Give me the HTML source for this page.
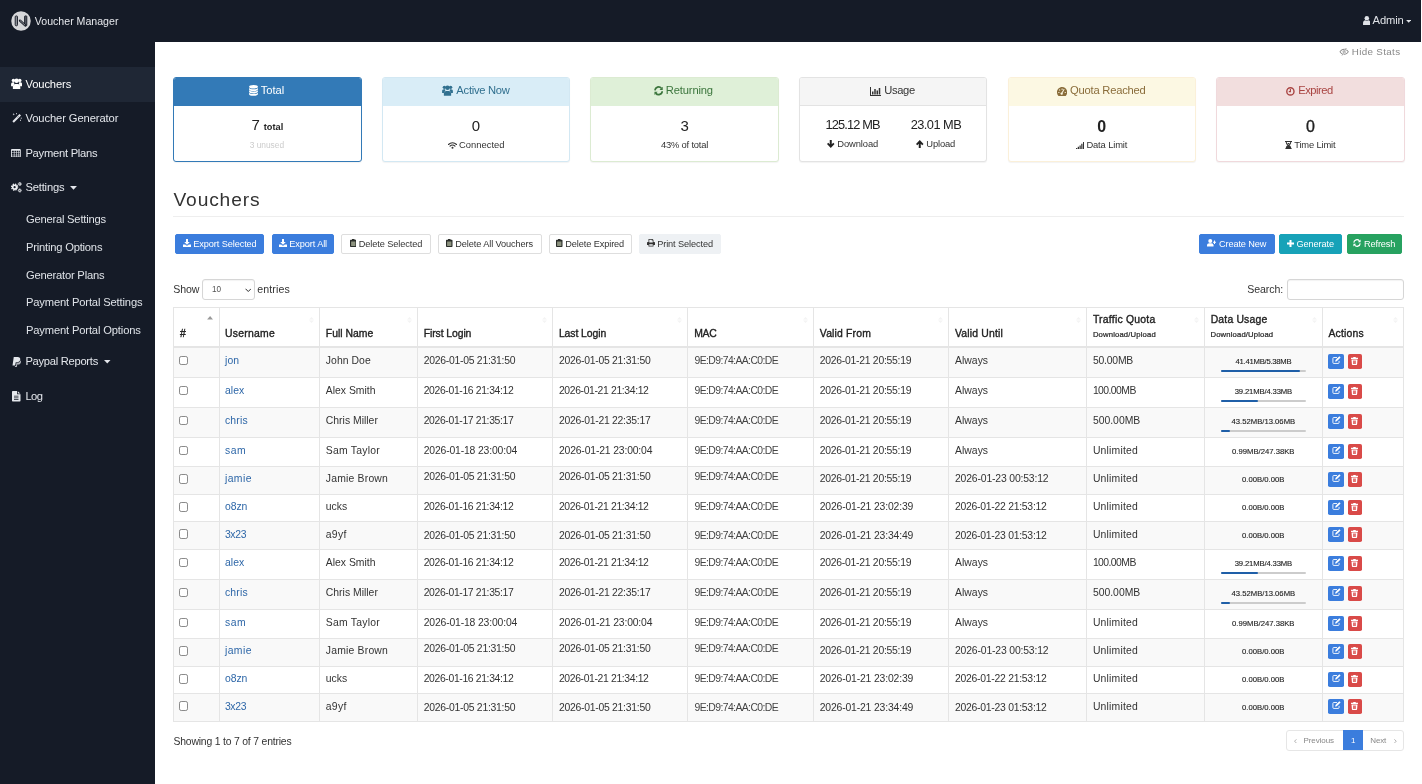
<!DOCTYPE html>
<html>
<head>
<meta charset="utf-8">
<title>Voucher Manager</title>
<style>
*{box-sizing:border-box;}
html,body{margin:0;padding:0;}
body{width:1422px;height:784px;overflow:hidden;position:relative;background:#151b27;font-family:"Liberation Sans",sans-serif;font-size:10.4px;color:#333;}
.abs{position:absolute;white-space:nowrap;}
svg{display:block;}
/* ---------- top bar ---------- */
#top{position:absolute;left:0;top:0;width:1422px;height:42px;background:#151b27;}
#brand{left:34.800px;top:14px;font-size:10.600px;line-height:14px;color:#e6e8ec;letter-spacing:0;}
#admin{left:1372.600px;top:13.200px;font-size:11.2px;line-height:14px;color:#dfe2e7;letter-spacing:-0.12px;}
/* ---------- sidebar ---------- */
#side{position:absolute;left:0;top:42px;width:155px;height:742px;background:#151b27;}
.nav{position:absolute;left:0;width:155px;height:35px;color:#e4e7ec;font-size:11.2px;line-height:14px;}
.nav.on{background:#1f2735;color:#fff;}
.nav .t{position:absolute;left:25.4px;top:10px;white-space:nowrap;}
.nav .i{position:absolute;left:11px;top:12px;}
.sub{position:absolute;left:25.9px;color:#dfe3e8;font-size:11.2px;line-height:14px;white-space:nowrap;}
/* ---------- main ---------- */
#main{position:absolute;left:155px;top:42px;width:1267px;height:742px;background:#fff;}
.card{position:absolute;top:77px;width:188.400px;height:85px;border:1px solid #ddd;border-radius:3px;background:#fff;box-shadow:0 1px 1px rgba(0,0,0,.05);overflow:hidden;}
.card .h{position:absolute;left:0;top:0;width:100%;height:28.5px;border-bottom:1px solid #ddd;}
.ctr{position:absolute;left:0;width:100%;text-align:center;white-space:nowrap;}

.card .hd{position:absolute;left:0;top:0;width:100%;height:28px;}
.card .ttl{letter-spacing:-0.27px;position:absolute;left:0;top:5.400px;width:100%;text-align:center;font-size:11.2px;line-height:14px;white-space:nowrap;}
.card .ttl svg{display:inline-block;vertical-align:-1.5px;margin-right:3px;}
.num{font-size:15px;line-height:18px;color:#222;}
.lbl{font-size:9.4px;line-height:12px;color:#333;}
.lbl svg{display:inline-block;vertical-align:-1px;margin-right:2.5px;}
h2{position:absolute;margin:0;left:173.5px;top:188px;font-size:19.2px;line-height:24px;font-weight:400;color:#333;letter-spacing:0.86px;}
#hr{position:absolute;left:173px;top:216px;width:1231px;height:1px;background:#eee;}
.btn{position:absolute;top:233.700px;height:20.500px;border-radius:2px;font-size:9.200px;line-height:19px;text-align:center;white-space:nowrap;color:#fff;letter-spacing:-0.1px;}
.btn svg{display:inline-block;vertical-align:-0.200px;margin-right:2.500px;}
.btn.pri{background:#3b7ddd;border:1px solid #3b7ddd;}
.btn.def{background:#fff;border:1px solid #dedede;color:#333;}
.btn.lt{background:#eef1f4;border:1px solid #eef1f4;color:#333;}
.btn.inf{background:#17a2b8;border:1px solid #17a2b8;}
.btn.suc{background:#27a260;border:1px solid #27a260;}

.btn i{font-style:normal;}
#len,#srch{position:absolute;top:279px;height:21px;border:1px solid #d6d6d6;border-radius:3px;background:#fff;box-shadow:inset 0 1px 1px rgba(0,0,0,.05);}

.ab{position:absolute;height:15px;border-radius:1.800px;}
.ab svg{position:absolute;left:50%;top:50%;}
.ab.e{left:1328px;width:16px;background:#3b7ddd;}
.ab.d{left:1348px;width:14px;background:#d94a48;}

#pg{position:absolute;left:1286px;top:730px;width:118px;height:21px;border:1px solid #e6e6e6;border-radius:3px;background:#fff;}
#pg1{position:absolute;left:1343px;top:730.400px;width:19.600px;height:20px;background:#3b7ddd;}
.pgt{font-size:8px;line-height:10px;color:#888;}
</style>
</head>
<body>
<div id="fg" style="position:absolute;left:0;top:0;width:1422px;height:784px;will-change:transform">
<!-- TOPBAR -->
<div id="top">
  <svg style="position:absolute;left:11.300px;top:11.400px" width="20" height="20" viewBox="0 0 20 20"><circle cx="10" cy="10" r="9.750" fill="#d6d7da"/><rect x="4.200" y="4.900" width="2.300" height="9.900" rx="1" fill="#8b8e95" stroke="#161b26" stroke-width="0.900"/><rect x="13.600" y="4.900" width="2.200" height="9.900" rx="0.600" fill="#555a63" stroke="#161b26" stroke-width="0.900"/><path d="M9 9.600L14.300 14.500" stroke="#161b26" stroke-width="2.300" stroke-linecap="round"/><path d="M9.200 9.700L14 14.200" stroke="#c9cacd" stroke-width="0.700" stroke-linecap="round" stroke-dasharray="1 0.800"/></svg>
  <div id="brand" class="abs">Voucher Manager</div>
  <svg style="position:absolute;left:1362.500px;top:15.700px" width="7.600" height="9" viewBox="0 0 15 18"><g fill="#dfe2e7"><circle cx="7.500" cy="4.500" r="4.500"/><path d="M0 18v-4c0-3 2-5 4.500-5.300 1 .8 2 1.100 3 1.100s2-.3 3-1.100C13 9 15 11 15 14v4z"/></g></svg><div id="admin" class="abs">Admin</div><svg style="position:absolute;left:1405.700px;top:19.800px" width="5.400" height="2.800" viewBox="0 0 11 6"><path fill="#dfe2e7" d="M0 0h11L5.500 6z"/></svg>
  <div style="position:absolute;left:1421px;top:0;width:1px;height:42px;background:#fff"></div>
</div>
<!-- SIDEBAR -->
<div id="side">
  <div class="nav on" style="top:25px"><span class="i" style="left:10.800px;top:11px"><svg width="11.2" height="11" viewBox="0 0 22 22"><g fill="#fff"><circle cx="4.600" cy="4.800" r="3.400"/><circle cx="17.400" cy="4.800" r="3.400"/><circle cx="11" cy="5.600" r="4.600"/><path d="M0 16.500v-4c0-2.200 1.600-3.800 3.800-3.800h2.400c-.5 1.200-.3 2.600.8 3.700-2.200 1-3.200 2.700-3.200 4.100z"/><path d="M22 16.500v-4c0-2.200-1.600-3.800-3.800-3.800h-2.400c.5 1.200.3 2.600-.8 3.700 2.200 1 3.200 2.700 3.200 4.100z"/><path d="M3.600 22v-4.500c0-3.200 2.200-5.300 5-5.300h4.800c2.800 0 5 2.100 5 5.300V22z"/></g></svg></span><span class="t" style="letter-spacing:-0.1px">Vouchers</span></div>
  <div class="nav" style="top:59.500px"><span class="i" style="left:11.500px;top:11.300px"><svg width="10" height="10" viewBox="0 0 20 20"><path d="M2.200 17.800L16.500 3.500" stroke="#e4e7ec" stroke-width="4.200" fill="none"/><path d="M11 9l2.200-2.200" stroke="#151b27" stroke-width="1" fill="none"/><g fill="#e4e7ec"><path d="M3.500 0l.7 1.800 1.800.7-1.800.7-.7 1.800-.7-1.800L1 2.500l1.800-.7z"/><rect x="8.500" y="0" width="1.500" height="2.500"/><rect x="17.500" y="9.500" width="2.500" height="1.500"/><rect x="16" y="13.500" width="2" height="2"/></g></svg></span><span class="t" style="top:9.500px;letter-spacing:-0.09px">Voucher Generator</span></div>
  <div class="nav" style="top:94px"><span class="i" style="left:11.400px;top:12.600px"><svg width="9.800" height="8.400" viewBox="0 0 20 17"><path fill="#e4e7ec" fill-rule="evenodd" d="M2 0h16a2 2 0 0 1 2 2v13a2 2 0 0 1-2 2H2a2 2 0 0 1-2-2V2a2 2 0 0 1 2-2zM1.800 3.500V7h4V3.500zm5.300 0V7h3.400V3.500zm4.700 0V7h3.400V3.500zm4.700 0V7h1.700V3.500zM1.800 8.300v3.200h4V8.300zm5.300 0v3.200h3.400V8.300zm4.700 0v3.200h3.400V8.300zm4.700 0v3.200h1.700V8.300zM1.800 12.800v2.600h4v-2.600zm5.300 0v2.600h3.400v-2.600zm4.700 0v2.600h3.400v-2.600zm4.700 0v2.600h1.700v-2.600z"/></svg></span><span class="t" style="letter-spacing:-0.25px">Payment Plans</span></div>
  <div class="nav" style="top:128.500px"><span class="i" style="left:11px;top:11.800px"><svg width="11" height="10.400" viewBox="0 0 22 21"><g fill="none" stroke="#eef0f3"><circle cx="7.200" cy="10.500" r="3.900" stroke-width="3.400"/><circle cx="7.200" cy="10.500" r="6.200" stroke-width="2.400" stroke-dasharray="2.900 1.970"/><circle cx="17.600" cy="3.900" r="2" stroke-width="2"/><circle cx="17.600" cy="3.900" r="3.300" stroke-width="1.500" stroke-dasharray="1.700 0.890"/><circle cx="17.600" cy="17.100" r="2" stroke-width="2"/><circle cx="17.600" cy="17.100" r="3.300" stroke-width="1.500" stroke-dasharray="1.700 0.890"/></g></svg></span><span class="t" style="top:9.500px;letter-spacing:-0.18px">Settings</span><svg style="position:absolute;left:70.200px;top:15.500px" width="7" height="3.700" viewBox="0 0 13 7"><path fill="#e4e7ec" d="M0 0h13L6.500 7z"/></svg></div>
  <div class="sub" style="top:170px;letter-spacing:-0.21px">General Settings</div>
  <div class="sub" style="top:197.700px;letter-spacing:-0.2px">Printing Options</div>
  <div class="sub" style="top:226px;letter-spacing:-0.2px">Generator Plans</div>
  <div class="sub" style="top:253.200px;letter-spacing:-0.15px">Payment Portal Settings</div>
  <div class="sub" style="top:281px;letter-spacing:-0.15px">Payment Portal Options</div>
  <div class="nav" style="top:302.500px"><span class="i" style="left:12px;top:12px"><svg width="9" height="10.500" viewBox="0 0 18 21"><path fill="#e4e7ec" d="M3.500 0h8c3.500 0 5.500 2.200 5 5.200-.6 3.600-3 5.300-6.500 5.300H7.500L6.300 17H1z"/><path fill="#e4e7ec" opacity=".75" d="M17 6.500c1 1 1.200 2.300.9 3.900-.6 3.200-2.800 4.600-5.900 4.600h-1.500l-1 6H5.500l.6-3h1.700l1.200-6.500h2c3.500 0 5.500-2 6-5z"/></svg></span><span class="t" style="top:9.500px;letter-spacing:-0.28px">Paypal Reports</span><svg style="position:absolute;left:104px;top:15.500px" width="6.500" height="3.500" viewBox="0 0 13 7"><path fill="#e4e7ec" d="M0 0h13L6.500 7z"/></svg></div>
  <div class="nav" style="top:337px"><span class="i" style="left:12px;top:12px"><svg width="8.500" height="10.500" viewBox="0 0 17 21"><path fill="#e4e7ec" fill-rule="evenodd" d="M1.500 0H10v6.500h7V19.500a1.500 1.500 0 0 1-1.500 1.500h-14A1.500 1.500 0 0 1 0 19.500v-18A1.500 1.500 0 0 1 1.500 0zM11.500 0.300L16.700 5h-5.200zM4 9.500v1.600h9V9.500zm0 3.500v1.600h9V13zm0 3.500v1.600h9v-1.600z"/></svg></span><span class="t" style="top:10px;letter-spacing:-0.6px">Log</span></div>
</div>
<!-- MAIN -->
<div id="main"></div>
<!--CARDS-->
<div class="abs" style="left:1339px;top:44.600px;font-size:9.800px;line-height:14px;color:#888;letter-spacing:0.34px"><svg style="display:inline-block;vertical-align:-1px;margin-right:2.500px" width="10.300" height="7.500" viewBox="0 0 20 16"><path fill="#888" fill-rule="evenodd" d="M0 8c2.500-4.200 6-6.300 10-6.300S17.500 3.800 20 8c-2.500 4.200-6 6.300-10 6.300S2.500 12.200 0 8zm2.200 0c2 3 4.800 4.500 7.800 4.500s5.800-1.500 7.800-4.500c-2-3-4.800-4.500-7.800-4.500S4.200 5 2.200 8z"/><circle cx="10" cy="8" r="3.300" fill="#888"/><path stroke="#fff" stroke-width="3.400" d="M14.800 .2L5.600 15.800"/><path stroke="#888" stroke-width="1.700" d="M14.500 0L5.500 16"/></svg>Hide Stats</div>

<div class="card" style="left:173.200px;border-color:#337ab7"><div class="hd" style="background:#337ab7"></div>
  <div class="ttl" style="color:#fff;letter-spacing:-0.03px;left:-1px"><svg width="9" height="10.800" viewBox="0 0 18 22"><g fill="#fff"><ellipse cx="9" cy="3.600" rx="9" ry="3.600"/><path d="M0 6.2c1.500 1.800 5 2.600 9 2.600s7.500-.8 9-2.600v3c0 1.900-4 3.400-9 3.400s-9-1.500-9-3.400z"/><path d="M0 10.9c1.500 1.800 5 2.600 9 2.600s7.500-.8 9-2.600v3c0 1.900-4 3.400-9 3.400s-9-1.500-9-3.400z"/><path d="M0 15.6c1.500 1.800 5 2.600 9 2.600s7.500-.8 9-2.600v3c0 1.900-4 3.400-9 3.400s-9-1.500-9-3.400z"/></g></svg>Total</div>
  <div class="ctr" style="top:37.500px"><span class="num" style="font-size:15px">7</span> <span style="font-size:9.200px;font-weight:700;color:#222;margin-left:1px">total</span></div>
  <div class="ctr lbl" style="top:61px;left:-0.500px;color:#ccc;font-size:8.400px">3 unused</div>
</div>

<div class="card" style="left:381.800px;border-color:#d3e8f3"><div class="hd" style="background:#d9edf7"></div>
  <div class="ttl" style="color:#31708f"><svg width="11" height="10.800" viewBox="0 0 22 22"><g fill="#31708f"><circle cx="4.600" cy="4.800" r="3.400"/><circle cx="17.400" cy="4.800" r="3.400"/><circle cx="11" cy="5.600" r="4.600"/><path d="M0 16.500v-4c0-2.200 1.600-3.800 3.800-3.800h2.400c-.5 1.200-.3 2.600.8 3.700-2.200 1-3.200 2.700-3.200 4.100z"/><path d="M22 16.500v-4c0-2.200-1.600-3.800-3.800-3.800h-2.400c.5 1.200.3 2.600-.8 3.700 2.200 1 3.200 2.700 3.200 4.100z"/><path d="M3.600 22v-4.500c0-3.200 2.200-5.300 5-5.300h4.800c2.800 0 5 2.100 5 5.300V22z"/></g></svg>Active Now</div>
  <div class="ctr num" style="top:39.200px">0</div>
  <div class="ctr lbl" style="top:61px"><svg width="9" height="7" viewBox="0 0 18 14"><g fill="none" stroke="#333" stroke-width="2.200" stroke-linecap="round"><path d="M1 5c4.500-4.500 11.500-4.500 16 0"/><path d="M4 8.200c3-3 7-3 10 0"/></g><circle cx="9" cy="11.500" r="2" fill="#333"/></svg>Connected</div>
</div>

<div class="card" style="left:590.400px;border-color:#dcebd2"><div class="hd" style="background:#dff0d8"></div>
  <div class="ttl" style="color:#3c763d;letter-spacing:-0.16px;left:-1px"><svg style="margin-right:2.400px" width="9.200" height="9.600" viewBox="0 0 20 20"><g fill="none" stroke="#3c763d" stroke-width="3.800"><path d="M2 9a8 8 0 0 1 14-4.500"/><path d="M18 11a8 8 0 0 1-14 4.500"/></g><path fill="#3c763d" d="M19 1v7h-7zM1 19v-7h7z"/></svg>Returning</div>
  <div class="ctr num" style="top:39.200px">3</div>
  <div class="ctr lbl" style="top:61px;letter-spacing:-0.2px">43% of total</div>
</div>

<div class="card" style="left:799px;border-color:#e3e3e3"><div class="hd" style="background:#f5f5f5;border-bottom:1px solid #e3e3e3"></div>
  <div class="ttl" style="color:#333;letter-spacing:-0.37px;left:-0.700px"><svg width="11" height="9" viewBox="0 0 22 18"><path fill="#333" d="M0 0h2v16h20v2H0zM4 9h3v6H4zm4.500-5h3v11h-3zM13 7h3v8h-3zm4.500-5h3v13h-3z"/></svg>Usage</div>
  <div class="abs num" style="left:25.600px;top:38.300px;letter-spacing:-0.86px;font-size:12.800px">125.12 MB</div>
  <div class="abs num" style="left:110.700px;top:38.300px;letter-spacing:-0.54px;font-size:12.800px">23.01 MB</div>
  <div class="abs lbl" style="left:27.300px;top:60px;letter-spacing:-0.11px"><svg width="7.500" height="8" viewBox="0 0 15 16"><path fill="#222" d="M5.500 0h4v8.500l3-3L15 8l-7.500 8L0 8l2.500-2.500 3 3z"/></svg>Download</div>
  <div class="abs lbl" style="left:116.300px;top:60px;letter-spacing:-0.15px"><svg width="7.500" height="8" viewBox="0 0 15 16"><path fill="#222" d="M5.500 16h4V7.500l3 3L15 8 7.500 0 0 8l2.500 2.500 3-3z"/></svg>Upload</div>
</div>

<div class="card" style="left:1007.600px;border-color:#fbf0d9"><div class="hd" style="background:#fcf8e3"></div>
  <div class="ttl" style="color:#8a6d3b;letter-spacing:-0.21px;left:-0.600px"><svg width="10.200" height="9" viewBox="0 0 22 19"><path fill="#8a6d3b" fill-rule="evenodd" d="M11 0c6 0 11 5 11 11 0 3-1 5.500-2.800 7.500-.3.300-.7.500-1.200.500H4c-.5 0-.9-.2-1.200-.5C1 16.500 0 14 0 11 0 5 5 0 11 0zm-1 3v3h2V3zM4 6l2 2 1.500-1.500-2-2zm12.500-1.500L12 12.500a2.500 2.500 0 1 1-2-1L14.500 4zM2.500 11v2h3v-2zm14 0v2h3v-2z"/></svg>Quota Reached</div>
  <div class="ctr num" style="top:39px;font-weight:700;font-size:16px;line-height:20px">0</div>
  <div class="ctr lbl" style="top:61px;left:-0.200px;letter-spacing:-0.13px"><svg width="8" height="7" viewBox="0 0 16 14"><path fill="#333" d="M0 12h2.500v2H0zm3.500-2.500h2.500v4.500H3.500zM7 7h2.500v7H7zm3.500-3.500H13V14h-2.500zM14 0h2v14h-2z"/></svg>Data Limit</div>
</div>

<div class="card" style="left:1216.200px;border-color:#f0d9dc"><div class="hd" style="background:#f2dede"></div>
  <div class="ttl" style="color:#a94442;letter-spacing:-0.5px;left:-0.900px"><svg width="8.800" height="8.800" viewBox="0 0 19 19"><circle cx="9.500" cy="9.500" r="7.800" fill="none" stroke="#a94442" stroke-width="3"/><path fill="none" stroke="#a94442" stroke-width="2.400" d="M9.500 4.500v5.500H6"/></svg>Expired</div>
  <div class="ctr num" style="top:39.300px;font-size:16px;line-height:20px;-webkit-text-stroke:0.350px #222">0</div>
  <div class="ctr lbl" style="top:61px;left:-0.300px;letter-spacing:-0.17px"><svg width="7" height="8.500" viewBox="0 0 14 17"><path fill="#333" fill-rule="evenodd" d="M0 0h14v2h-1.500c0 3-1.500 5-3.500 6.500 2 1.500 3.500 3.500 3.500 6.500H14v2H0v-2h1.500c0-3 1.500-5 3.500-6.500C3 7 1.500 5 1.500 2H0zM3.500 2c0 2.500 1.500 4.200 3.500 5.300C9 6.200 10.500 4.500 10.500 2zM5 4h4c-.3 1-1 1.800-2 2.400C6 5.800 5.300 5 5 4z"/></svg>Time Limit</div>
</div>

<h2>Vouchers</h2>
<div id="hr"></div>

<!--TOOLBAR-->
<div class="btn pri" style="left:175px;width:89.400px"><svg width="8" height="8" viewBox="0 0 16 16"><path fill="#fff" d="M6 0h4v6h3.500L8 11.500 2.500 6H6zM0 11h4.500l2 2h3l2-2H16v5H0z"/></svg>Export Selected</div>
<div class="btn pri" style="left:271.600px;width:62.600px"><svg width="8" height="8" viewBox="0 0 16 16"><path fill="#fff" d="M6 0h4v6h3.500L8 11.500 2.500 6H6zM0 11h4.500l2 2h3l2-2H16v5H0z"/></svg>Export All</div>
<div class="btn def" style="left:341.400px;width:89.200px"><svg width="6.500" height="8" viewBox="0 0 13 16"><path fill="#2a2d2a" d="M4 0h5v1.500h2.500a1.500 1.500 0 0 1 1.500 1.500v11.500a1.500 1.500 0 0 1-1.500 1.500h-10A1.500 1.500 0 0 1 0 14.500V3a1.500 1.500 0 0 1 1.500-1.500H4z"/><rect x="2.200" y="5" width="8.600" height="9" fill="#8d937f"/></svg>Delete Selected</div>
<div class="btn def" style="left:437.700px;width:104px"><svg width="6.500" height="8" viewBox="0 0 13 16"><path fill="#2a2d2a" d="M4 0h5v1.500h2.500a1.500 1.500 0 0 1 1.500 1.500v11.500a1.500 1.500 0 0 1-1.500 1.500h-10A1.500 1.500 0 0 1 0 14.500V3a1.500 1.500 0 0 1 1.500-1.500H4z"/><rect x="2.200" y="5" width="8.600" height="9" fill="#8d937f"/></svg>Delete All Vouchers</div>
<div class="btn def" style="left:548.800px;width:82.800px"><svg width="6.500" height="8" viewBox="0 0 13 16"><path fill="#2a2d2a" d="M4 0h5v1.500h2.500a1.500 1.500 0 0 1 1.500 1.500v11.500a1.500 1.500 0 0 1-1.500 1.500h-10A1.500 1.500 0 0 1 0 14.500V3a1.500 1.500 0 0 1 1.500-1.500H4z"/><rect x="2.200" y="5" width="8.600" height="9" fill="#8d937f"/></svg>Delete Expired</div>
<div class="btn lt" style="left:638.800px;width:82px"><svg width="8" height="7.500" viewBox="0 0 16 15"><path fill="#333" fill-rule="evenodd" d="M3 0h8l2 2v4h1.500A1.500 1.500 0 0 1 16 7.500V12h-3v3H3v-3H0V7.500A1.500 1.500 0 0 1 1.500 6H3zm1.500 1.500V7h7V3h-2V1.500zm0 9V13.500h7v-3z"/></svg>Print Selected</div>
<div class="btn pri" style="left:1199px;width:75.800px"><svg width="9" height="7.500" viewBox="0 0 18 15"><g fill="#fff"><circle cx="6.500" cy="4" r="4"/><path d="M0 15v-2.500C0 10 2 8.500 4.500 8.500h4c2.500 0 4.500 1.500 4.500 4v2.500z"/><path d="M14 3h2v2.500h2v2h-2V10h-2V7.500h-2v-2h2z"/></g></svg>Create New</div>
<div class="btn inf" style="left:1278.900px;width:63.200px"><svg width="7" height="7" viewBox="0 0 14 14"><path fill="#fff" d="M5 0h4v5h5v4H9v5H5V9H0V5h5z"/></svg>Generate</div>
<div class="btn suc" style="left:1346.600px;width:55.600px"><svg width="8" height="8" viewBox="0 0 20 20"><g fill="none" stroke="#fff" stroke-width="3"><path d="M2 9a8 8 0 0 1 14-4.500"/><path d="M18 11a8 8 0 0 1-14 4.500"/></g><path fill="#fff" d="M19 1v7h-7zM1 19v-7h7z"/></svg>Refresh</div>

<div class="abs" style="left:173.300px;top:282px;font-size:10.600px;line-height:14px;letter-spacing:-0.1px">Show</div>
<div id="len" style="left:202px;width:52.500px"><span class="abs" style="left:9px;top:4.500px;font-size:8.200px;line-height:10px;color:#555">10</span><svg style="position:absolute;left:41.500px;top:7.500px" width="6.500" height="4.500" viewBox="0 0 13 9"><path fill="none" stroke="#222" stroke-width="1.900" d="M1 1.500l5.500 5.500L12 1.500"/></svg></div>
<div class="abs" style="left:257.300px;top:282px;font-size:10.600px;line-height:14px;letter-spacing:0.1px">entries</div>
<div class="abs" style="left:1247.300px;top:282px;font-size:10.600px;line-height:14px;letter-spacing:-0.1px">Search:</div>
<div id="srch" style="left:1287.200px;width:117px"></div>

<!--TABLE-->
<div style="position:absolute;left:174px;top:348px;width:1229px;height:29px;background:#f9f9f9;"></div>
<div style="position:absolute;left:174px;top:408px;width:1229px;height:29px;background:#f9f9f9;"></div>
<div style="position:absolute;left:174px;top:467px;width:1229px;height:27px;background:#f9f9f9;"></div>
<div style="position:absolute;left:174px;top:522px;width:1229px;height:27px;background:#f9f9f9;"></div>
<div style="position:absolute;left:174px;top:580px;width:1229px;height:29px;background:#f9f9f9;"></div>
<div style="position:absolute;left:174px;top:639px;width:1229px;height:27px;background:#f9f9f9;"></div>
<div style="position:absolute;left:174px;top:694px;width:1229px;height:27px;background:#f9f9f9;"></div>
<div style="position:absolute;left:173px;top:307px;width:1231px;height:1px;background:#e5e5e5;"></div>
<div style="position:absolute;left:173px;top:346px;width:1231px;height:2px;background:#e5e5e5;"></div>
<div style="position:absolute;left:173px;top:377px;width:1231px;height:1px;background:#e5e5e5;"></div>
<div style="position:absolute;left:173px;top:407px;width:1231px;height:1px;background:#e5e5e5;"></div>
<div style="position:absolute;left:173px;top:437px;width:1231px;height:1px;background:#e5e5e5;"></div>
<div style="position:absolute;left:173px;top:466px;width:1231px;height:1px;background:#e5e5e5;"></div>
<div style="position:absolute;left:173px;top:494px;width:1231px;height:1px;background:#e5e5e5;"></div>
<div style="position:absolute;left:173px;top:521px;width:1231px;height:1px;background:#e5e5e5;"></div>
<div style="position:absolute;left:173px;top:549px;width:1231px;height:1px;background:#e5e5e5;"></div>
<div style="position:absolute;left:173px;top:579px;width:1231px;height:1px;background:#e5e5e5;"></div>
<div style="position:absolute;left:173px;top:609px;width:1231px;height:1px;background:#e5e5e5;"></div>
<div style="position:absolute;left:173px;top:638px;width:1231px;height:1px;background:#e5e5e5;"></div>
<div style="position:absolute;left:173px;top:666px;width:1231px;height:1px;background:#e5e5e5;"></div>
<div style="position:absolute;left:173px;top:693px;width:1231px;height:1px;background:#e5e5e5;"></div>
<div style="position:absolute;left:173px;top:721px;width:1231px;height:1px;background:#e5e5e5;"></div>
<div style="position:absolute;left:173px;top:307px;width:1px;height:415px;background:#e5e5e5;"></div>
<div style="position:absolute;left:219px;top:307px;width:1px;height:415px;background:#e5e5e5;"></div>
<div style="position:absolute;left:319px;top:307px;width:1px;height:415px;background:#e5e5e5;"></div>
<div style="position:absolute;left:417px;top:307px;width:1px;height:415px;background:#e5e5e5;"></div>
<div style="position:absolute;left:552px;top:307px;width:1px;height:415px;background:#e5e5e5;"></div>
<div style="position:absolute;left:687px;top:307px;width:1px;height:415px;background:#e5e5e5;"></div>
<div style="position:absolute;left:813px;top:307px;width:1px;height:415px;background:#e5e5e5;"></div>
<div style="position:absolute;left:948px;top:307px;width:1px;height:415px;background:#e5e5e5;"></div>
<div style="position:absolute;left:1086px;top:307px;width:1px;height:415px;background:#e5e5e5;"></div>
<div style="position:absolute;left:1204px;top:307px;width:1px;height:415px;background:#e5e5e5;"></div>
<div style="position:absolute;left:1322px;top:307px;width:1px;height:415px;background:#e5e5e5;"></div>
<div style="position:absolute;left:1403px;top:307px;width:1px;height:415px;background:#e5e5e5;"></div>
<svg style="position:absolute;left:207.300px;top:316px" width="6.200" height="3.500" viewBox="0 0 12 7"><path fill="#999" d="M6 0l6 7H0z"/></svg>
<svg style="position:absolute;left:308.5px;top:317px" width="5" height="6" viewBox="0 0 10 12"><path fill="#f4f4f4" d="M5 0l5 5H0zM5 12L0 7h10z"/></svg>
<svg style="position:absolute;left:406.5px;top:317px" width="5" height="6" viewBox="0 0 10 12"><path fill="#f4f4f4" d="M5 0l5 5H0zM5 12L0 7h10z"/></svg>
<svg style="position:absolute;left:541.5px;top:317px" width="5" height="6" viewBox="0 0 10 12"><path fill="#f4f4f4" d="M5 0l5 5H0zM5 12L0 7h10z"/></svg>
<svg style="position:absolute;left:676.5px;top:317px" width="5" height="6" viewBox="0 0 10 12"><path fill="#f4f4f4" d="M5 0l5 5H0zM5 12L0 7h10z"/></svg>
<svg style="position:absolute;left:802.5px;top:317px" width="5" height="6" viewBox="0 0 10 12"><path fill="#f4f4f4" d="M5 0l5 5H0zM5 12L0 7h10z"/></svg>
<svg style="position:absolute;left:937.5px;top:317px" width="5" height="6" viewBox="0 0 10 12"><path fill="#f4f4f4" d="M5 0l5 5H0zM5 12L0 7h10z"/></svg>
<svg style="position:absolute;left:1075.5px;top:317px" width="5" height="6" viewBox="0 0 10 12"><path fill="#f4f4f4" d="M5 0l5 5H0zM5 12L0 7h10z"/></svg>
<svg style="position:absolute;left:1193.5px;top:317px" width="5" height="6" viewBox="0 0 10 12"><path fill="#f4f4f4" d="M5 0l5 5H0zM5 12L0 7h10z"/></svg>
<svg style="position:absolute;left:1311.5px;top:317px" width="5" height="6" viewBox="0 0 10 12"><path fill="#f4f4f4" d="M5 0l5 5H0zM5 12L0 7h10z"/></svg>
<svg style="position:absolute;left:1392.5px;top:317px" width="5" height="6" viewBox="0 0 10 12"><path fill="#f4f4f4" d="M5 0l5 5H0zM5 12L0 7h10z"/></svg>
<div style="position:absolute;left:179px;top:355.9px;width:9.400px;height:9.400px;border:1px solid #8a8a8a;border-radius:2.200px;background:#fff"></div>
<div style="position:absolute;left:1221px;top:370px;width:85px;height:2px;background:#ccc;border-radius:1px;overflow:hidden"></div>
<div style="position:absolute;left:1221px;top:370px;width:79.0px;height:2px;background:#1f5fa8;border-radius:1px"></div>
<div class="ab e" style="top:354px"><svg style="margin-left:-4.300px;margin-top:-5.600px" width="9" height="8.200" viewBox="0 0 16 16"><path fill="none" stroke="#fff" stroke-width="1.800" d="M13 9.500V13a1.500 1.500 0 0 1-1.500 1.500h-9A1.500 1.500 0 0 1 1 13V4.500A1.500 1.500 0 0 1 2.500 3H9"/><path fill="#fff" d="M6 8l7.500-7.500 2.500 2.500L8.500 10.500l-3 .5z"/></svg></div>
<div class="ab d" style="top:354px"><svg style="margin-left:-3.900px;margin-top:-4.900px" width="7" height="8" viewBox="0 0 14 16"><path fill="#fff" fill-rule="evenodd" d="M5 0h4l1 1.500h4V4H0V1.500h4zM1 5h12l-.8 9.500a1.500 1.500 0 0 1-1.500 1.500H3.300a1.500 1.500 0 0 1-1.500-1.500zM4 7v7h1.500V7zm2.300 0v7h1.500V7zm2.300 0v7H10V7z"/></svg></div>
<div style="position:absolute;left:179px;top:385.9px;width:9.400px;height:9.400px;border:1px solid #8a8a8a;border-radius:2.200px;background:#fff"></div>
<div style="position:absolute;left:1221px;top:400px;width:85px;height:2px;background:#ccc;border-radius:1px;overflow:hidden"></div>
<div style="position:absolute;left:1221px;top:400px;width:36.5px;height:2px;background:#1f5fa8;border-radius:1px"></div>
<div class="ab e" style="top:384px"><svg style="margin-left:-4.300px;margin-top:-5.600px" width="9" height="8.200" viewBox="0 0 16 16"><path fill="none" stroke="#fff" stroke-width="1.800" d="M13 9.500V13a1.500 1.500 0 0 1-1.500 1.500h-9A1.500 1.500 0 0 1 1 13V4.500A1.500 1.500 0 0 1 2.500 3H9"/><path fill="#fff" d="M6 8l7.500-7.500 2.500 2.500L8.500 10.500l-3 .5z"/></svg></div>
<div class="ab d" style="top:384px"><svg style="margin-left:-3.900px;margin-top:-4.900px" width="7" height="8" viewBox="0 0 14 16"><path fill="#fff" fill-rule="evenodd" d="M5 0h4l1 1.500h4V4H0V1.500h4zM1 5h12l-.8 9.500a1.500 1.500 0 0 1-1.500 1.500H3.300a1.500 1.500 0 0 1-1.500-1.500zM4 7v7h1.500V7zm2.300 0v7h1.500V7zm2.300 0v7H10V7z"/></svg></div>
<div style="position:absolute;left:179px;top:415.9px;width:9.400px;height:9.400px;border:1px solid #8a8a8a;border-radius:2.200px;background:#fff"></div>
<div style="position:absolute;left:1221px;top:430px;width:85px;height:2px;background:#ccc;border-radius:1px;overflow:hidden"></div>
<div style="position:absolute;left:1221px;top:430px;width:9.3px;height:2px;background:#1f5fa8;border-radius:1px"></div>
<div class="ab e" style="top:414px"><svg style="margin-left:-4.300px;margin-top:-5.600px" width="9" height="8.200" viewBox="0 0 16 16"><path fill="none" stroke="#fff" stroke-width="1.800" d="M13 9.500V13a1.500 1.500 0 0 1-1.500 1.500h-9A1.500 1.500 0 0 1 1 13V4.500A1.500 1.500 0 0 1 2.500 3H9"/><path fill="#fff" d="M6 8l7.500-7.500 2.500 2.500L8.500 10.500l-3 .5z"/></svg></div>
<div class="ab d" style="top:414px"><svg style="margin-left:-3.900px;margin-top:-4.900px" width="7" height="8" viewBox="0 0 14 16"><path fill="#fff" fill-rule="evenodd" d="M5 0h4l1 1.500h4V4H0V1.500h4zM1 5h12l-.8 9.500a1.500 1.500 0 0 1-1.500 1.500H3.300a1.500 1.500 0 0 1-1.500-1.500zM4 7v7h1.500V7zm2.300 0v7h1.500V7zm2.300 0v7H10V7z"/></svg></div>
<div style="position:absolute;left:179px;top:445.9px;width:9.400px;height:9.400px;border:1px solid #8a8a8a;border-radius:2.200px;background:#fff"></div>
<div class="ab e" style="top:444px"><svg style="margin-left:-4.300px;margin-top:-5.600px" width="9" height="8.200" viewBox="0 0 16 16"><path fill="none" stroke="#fff" stroke-width="1.800" d="M13 9.500V13a1.500 1.500 0 0 1-1.500 1.500h-9A1.500 1.500 0 0 1 1 13V4.500A1.500 1.500 0 0 1 2.500 3H9"/><path fill="#fff" d="M6 8l7.500-7.500 2.500 2.500L8.500 10.500l-3 .5z"/></svg></div>
<div class="ab d" style="top:444px"><svg style="margin-left:-3.900px;margin-top:-4.900px" width="7" height="8" viewBox="0 0 14 16"><path fill="#fff" fill-rule="evenodd" d="M5 0h4l1 1.500h4V4H0V1.500h4zM1 5h12l-.8 9.500a1.500 1.500 0 0 1-1.500 1.500H3.300a1.500 1.500 0 0 1-1.500-1.500zM4 7v7h1.500V7zm2.300 0v7h1.500V7zm2.300 0v7H10V7z"/></svg></div>
<div style="position:absolute;left:179px;top:474.3px;width:9.400px;height:9.400px;border:1px solid #8a8a8a;border-radius:2.200px;background:#fff"></div>
<div class="ab e" style="top:472px"><svg style="margin-left:-4.300px;margin-top:-5.600px" width="9" height="8.200" viewBox="0 0 16 16"><path fill="none" stroke="#fff" stroke-width="1.800" d="M13 9.500V13a1.500 1.500 0 0 1-1.500 1.500h-9A1.500 1.500 0 0 1 1 13V4.500A1.500 1.500 0 0 1 2.500 3H9"/><path fill="#fff" d="M6 8l7.500-7.500 2.500 2.500L8.500 10.500l-3 .5z"/></svg></div>
<div class="ab d" style="top:472px"><svg style="margin-left:-3.900px;margin-top:-4.900px" width="7" height="8" viewBox="0 0 14 16"><path fill="#fff" fill-rule="evenodd" d="M5 0h4l1 1.500h4V4H0V1.500h4zM1 5h12l-.8 9.500a1.500 1.500 0 0 1-1.500 1.500H3.300a1.500 1.500 0 0 1-1.500-1.500zM4 7v7h1.500V7zm2.300 0v7h1.500V7zm2.300 0v7H10V7z"/></svg></div>
<div style="position:absolute;left:179px;top:502.3px;width:9.400px;height:9.400px;border:1px solid #8a8a8a;border-radius:2.200px;background:#fff"></div>
<div class="ab e" style="top:500px"><svg style="margin-left:-4.300px;margin-top:-5.600px" width="9" height="8.200" viewBox="0 0 16 16"><path fill="none" stroke="#fff" stroke-width="1.800" d="M13 9.500V13a1.500 1.500 0 0 1-1.500 1.500h-9A1.500 1.500 0 0 1 1 13V4.500A1.500 1.500 0 0 1 2.500 3H9"/><path fill="#fff" d="M6 8l7.500-7.500 2.500 2.500L8.500 10.500l-3 .5z"/></svg></div>
<div class="ab d" style="top:500px"><svg style="margin-left:-3.900px;margin-top:-4.900px" width="7" height="8" viewBox="0 0 14 16"><path fill="#fff" fill-rule="evenodd" d="M5 0h4l1 1.500h4V4H0V1.500h4zM1 5h12l-.8 9.500a1.500 1.500 0 0 1-1.500 1.500H3.300a1.500 1.500 0 0 1-1.500-1.500zM4 7v7h1.500V7zm2.300 0v7h1.500V7zm2.300 0v7H10V7z"/></svg></div>
<div style="position:absolute;left:179px;top:529.3px;width:9.400px;height:9.400px;border:1px solid #8a8a8a;border-radius:2.200px;background:#fff"></div>
<div class="ab e" style="top:527px"><svg style="margin-left:-4.300px;margin-top:-5.600px" width="9" height="8.200" viewBox="0 0 16 16"><path fill="none" stroke="#fff" stroke-width="1.800" d="M13 9.500V13a1.500 1.500 0 0 1-1.500 1.500h-9A1.500 1.500 0 0 1 1 13V4.500A1.500 1.500 0 0 1 2.500 3H9"/><path fill="#fff" d="M6 8l7.500-7.500 2.500 2.500L8.500 10.500l-3 .5z"/></svg></div>
<div class="ab d" style="top:527px"><svg style="margin-left:-3.900px;margin-top:-4.900px" width="7" height="8" viewBox="0 0 14 16"><path fill="#fff" fill-rule="evenodd" d="M5 0h4l1 1.500h4V4H0V1.500h4zM1 5h12l-.8 9.500a1.500 1.500 0 0 1-1.500 1.500H3.300a1.500 1.500 0 0 1-1.500-1.500zM4 7v7h1.500V7zm2.300 0v7h1.500V7zm2.300 0v7H10V7z"/></svg></div>
<div style="position:absolute;left:179px;top:557.9px;width:9.400px;height:9.400px;border:1px solid #8a8a8a;border-radius:2.200px;background:#fff"></div>
<div style="position:absolute;left:1221px;top:572px;width:85px;height:2px;background:#ccc;border-radius:1px;overflow:hidden"></div>
<div style="position:absolute;left:1221px;top:572px;width:36.5px;height:2px;background:#1f5fa8;border-radius:1px"></div>
<div class="ab e" style="top:556px"><svg style="margin-left:-4.300px;margin-top:-5.600px" width="9" height="8.200" viewBox="0 0 16 16"><path fill="none" stroke="#fff" stroke-width="1.800" d="M13 9.500V13a1.500 1.500 0 0 1-1.500 1.500h-9A1.500 1.500 0 0 1 1 13V4.500A1.500 1.500 0 0 1 2.500 3H9"/><path fill="#fff" d="M6 8l7.500-7.500 2.500 2.500L8.500 10.500l-3 .5z"/></svg></div>
<div class="ab d" style="top:556px"><svg style="margin-left:-3.900px;margin-top:-4.900px" width="7" height="8" viewBox="0 0 14 16"><path fill="#fff" fill-rule="evenodd" d="M5 0h4l1 1.500h4V4H0V1.500h4zM1 5h12l-.8 9.500a1.500 1.500 0 0 1-1.500 1.500H3.300a1.500 1.500 0 0 1-1.500-1.500zM4 7v7h1.500V7zm2.300 0v7h1.500V7zm2.300 0v7H10V7z"/></svg></div>
<div style="position:absolute;left:179px;top:587.9px;width:9.400px;height:9.400px;border:1px solid #8a8a8a;border-radius:2.200px;background:#fff"></div>
<div style="position:absolute;left:1221px;top:602px;width:85px;height:2px;background:#ccc;border-radius:1px;overflow:hidden"></div>
<div style="position:absolute;left:1221px;top:602px;width:9.3px;height:2px;background:#1f5fa8;border-radius:1px"></div>
<div class="ab e" style="top:586px"><svg style="margin-left:-4.300px;margin-top:-5.600px" width="9" height="8.200" viewBox="0 0 16 16"><path fill="none" stroke="#fff" stroke-width="1.800" d="M13 9.500V13a1.500 1.500 0 0 1-1.500 1.500h-9A1.500 1.500 0 0 1 1 13V4.500A1.500 1.500 0 0 1 2.500 3H9"/><path fill="#fff" d="M6 8l7.500-7.500 2.500 2.500L8.500 10.500l-3 .5z"/></svg></div>
<div class="ab d" style="top:586px"><svg style="margin-left:-3.900px;margin-top:-4.900px" width="7" height="8" viewBox="0 0 14 16"><path fill="#fff" fill-rule="evenodd" d="M5 0h4l1 1.500h4V4H0V1.500h4zM1 5h12l-.8 9.500a1.500 1.500 0 0 1-1.500 1.500H3.300a1.500 1.500 0 0 1-1.500-1.500zM4 7v7h1.500V7zm2.300 0v7h1.500V7zm2.300 0v7H10V7z"/></svg></div>
<div style="position:absolute;left:179px;top:617.9px;width:9.400px;height:9.400px;border:1px solid #8a8a8a;border-radius:2.200px;background:#fff"></div>
<div class="ab e" style="top:616px"><svg style="margin-left:-4.300px;margin-top:-5.600px" width="9" height="8.200" viewBox="0 0 16 16"><path fill="none" stroke="#fff" stroke-width="1.800" d="M13 9.500V13a1.500 1.500 0 0 1-1.500 1.500h-9A1.500 1.500 0 0 1 1 13V4.500A1.500 1.500 0 0 1 2.500 3H9"/><path fill="#fff" d="M6 8l7.500-7.500 2.500 2.500L8.500 10.500l-3 .5z"/></svg></div>
<div class="ab d" style="top:616px"><svg style="margin-left:-3.900px;margin-top:-4.900px" width="7" height="8" viewBox="0 0 14 16"><path fill="#fff" fill-rule="evenodd" d="M5 0h4l1 1.500h4V4H0V1.500h4zM1 5h12l-.8 9.500a1.500 1.500 0 0 1-1.500 1.500H3.300a1.500 1.500 0 0 1-1.500-1.500zM4 7v7h1.500V7zm2.300 0v7h1.500V7zm2.300 0v7H10V7z"/></svg></div>
<div style="position:absolute;left:179px;top:646.3px;width:9.400px;height:9.400px;border:1px solid #8a8a8a;border-radius:2.200px;background:#fff"></div>
<div class="ab e" style="top:644px"><svg style="margin-left:-4.300px;margin-top:-5.600px" width="9" height="8.200" viewBox="0 0 16 16"><path fill="none" stroke="#fff" stroke-width="1.800" d="M13 9.500V13a1.500 1.500 0 0 1-1.500 1.500h-9A1.500 1.500 0 0 1 1 13V4.500A1.500 1.500 0 0 1 2.500 3H9"/><path fill="#fff" d="M6 8l7.500-7.500 2.500 2.500L8.500 10.500l-3 .5z"/></svg></div>
<div class="ab d" style="top:644px"><svg style="margin-left:-3.900px;margin-top:-4.900px" width="7" height="8" viewBox="0 0 14 16"><path fill="#fff" fill-rule="evenodd" d="M5 0h4l1 1.500h4V4H0V1.500h4zM1 5h12l-.8 9.500a1.500 1.500 0 0 1-1.500 1.500H3.300a1.500 1.500 0 0 1-1.500-1.500zM4 7v7h1.500V7zm2.300 0v7h1.500V7zm2.300 0v7H10V7z"/></svg></div>
<div style="position:absolute;left:179px;top:674.3px;width:9.400px;height:9.400px;border:1px solid #8a8a8a;border-radius:2.200px;background:#fff"></div>
<div class="ab e" style="top:672px"><svg style="margin-left:-4.300px;margin-top:-5.600px" width="9" height="8.200" viewBox="0 0 16 16"><path fill="none" stroke="#fff" stroke-width="1.800" d="M13 9.500V13a1.500 1.500 0 0 1-1.500 1.500h-9A1.500 1.500 0 0 1 1 13V4.500A1.500 1.500 0 0 1 2.500 3H9"/><path fill="#fff" d="M6 8l7.500-7.500 2.500 2.500L8.500 10.500l-3 .5z"/></svg></div>
<div class="ab d" style="top:672px"><svg style="margin-left:-3.900px;margin-top:-4.900px" width="7" height="8" viewBox="0 0 14 16"><path fill="#fff" fill-rule="evenodd" d="M5 0h4l1 1.500h4V4H0V1.500h4zM1 5h12l-.8 9.500a1.500 1.500 0 0 1-1.500 1.500H3.300a1.500 1.500 0 0 1-1.500-1.500zM4 7v7h1.500V7zm2.300 0v7h1.500V7zm2.300 0v7H10V7z"/></svg></div>
<div style="position:absolute;left:179px;top:701.3px;width:9.400px;height:9.400px;border:1px solid #8a8a8a;border-radius:2.200px;background:#fff"></div>
<div class="ab e" style="top:699px"><svg style="margin-left:-4.300px;margin-top:-5.600px" width="9" height="8.200" viewBox="0 0 16 16"><path fill="none" stroke="#fff" stroke-width="1.800" d="M13 9.500V13a1.500 1.500 0 0 1-1.500 1.500h-9A1.500 1.500 0 0 1 1 13V4.500A1.500 1.500 0 0 1 2.500 3H9"/><path fill="#fff" d="M6 8l7.500-7.500 2.500 2.500L8.500 10.500l-3 .5z"/></svg></div>
<div class="ab d" style="top:699px"><svg style="margin-left:-3.900px;margin-top:-4.900px" width="7" height="8" viewBox="0 0 14 16"><path fill="#fff" fill-rule="evenodd" d="M5 0h4l1 1.500h4V4H0V1.500h4zM1 5h12l-.8 9.500a1.500 1.500 0 0 1-1.500 1.500H3.300a1.500 1.500 0 0 1-1.500-1.500zM4 7v7h1.500V7zm2.300 0v7h1.500V7zm2.300 0v7H10V7z"/></svg></div>
<span class="abs" style="left:180.0px;top:327.2px;font-size:10.4px;line-height:14px;color:#222;letter-spacing:2.42px;-webkit-text-stroke:0.35px #222;">#</span>
<span class="abs" style="left:224.9px;top:327.2px;font-size:10.4px;line-height:14px;color:#222;letter-spacing:0.27px;-webkit-text-stroke:0.35px #222;">Username</span>
<span class="abs" style="left:325.8px;top:327.2px;font-size:10.4px;line-height:14px;color:#222;letter-spacing:0.02px;-webkit-text-stroke:0.35px #222;">Full Name</span>
<span class="abs" style="left:423.7px;top:327.2px;font-size:10.4px;line-height:14px;color:#222;letter-spacing:-0.08px;-webkit-text-stroke:0.35px #222;">First Login</span>
<span class="abs" style="left:558.9px;top:327.2px;font-size:10.4px;line-height:14px;color:#222;letter-spacing:-0.06px;-webkit-text-stroke:0.35px #222;">Last Login</span>
<span class="abs" style="left:694.2px;top:327.2px;font-size:10.4px;line-height:14px;color:#222;letter-spacing:-0.30px;-webkit-text-stroke:0.35px #222;">MAC</span>
<span class="abs" style="left:819.8px;top:327.2px;font-size:10.4px;line-height:14px;color:#222;letter-spacing:0.18px;-webkit-text-stroke:0.35px #222;">Valid From</span>
<span class="abs" style="left:955.0px;top:327.2px;font-size:10.4px;line-height:14px;color:#222;letter-spacing:0.19px;-webkit-text-stroke:0.35px #222;">Valid Until</span>
<span class="abs" style="left:1092.9px;top:313.1px;font-size:10.4px;line-height:14px;color:#222;letter-spacing:0.24px;-webkit-text-stroke:0.35px #222;">Traffic Quota</span>
<span class="abs" style="left:1210.7px;top:313.1px;font-size:10.4px;line-height:14px;color:#222;letter-spacing:0.18px;-webkit-text-stroke:0.35px #222;">Data Usage</span>
<span class="abs" style="left:1328.4px;top:327.2px;font-size:10.4px;line-height:14px;color:#222;letter-spacing:0.19px;-webkit-text-stroke:0.35px #222;">Actions</span>
<span class="abs" style="left:1092.9px;top:330.1px;font-size:7.7px;line-height:10px;color:#222;letter-spacing:0.15px;-webkit-text-stroke:0.2px #222;">Download/Upload</span>
<span class="abs" style="left:1210.5px;top:330.1px;font-size:7.7px;line-height:10px;color:#222;letter-spacing:0.14px;-webkit-text-stroke:0.2px #222;">Download/Upload</span>
<span class="abs" style="left:224.9px;top:354.2px;font-size:10.4px;line-height:14px;color:#2e67a8;letter-spacing:0.18px;">jon</span>
<span class="abs" style="left:325.8px;top:354.2px;font-size:10.4px;line-height:14px;color:#333;letter-spacing:0.06px;">John Doe</span>
<span class="abs" style="left:423.7px;top:354.2px;font-size:10.4px;line-height:14px;color:#333;letter-spacing:-0.26px;">2026-01-05 21:31:50</span>
<span class="abs" style="left:558.9px;top:354.2px;font-size:10.4px;line-height:14px;color:#333;letter-spacing:-0.26px;">2026-01-05 21:31:50</span>
<span class="abs" style="left:694.5px;top:354.2px;font-size:10.4px;line-height:14px;color:#444;letter-spacing:-0.59px;">9E:D9:74:AA:C0:DE</span>
<span class="abs" style="left:819.7px;top:354.2px;font-size:10.4px;line-height:14px;color:#333;letter-spacing:-0.26px;">2026-01-21 20:55:19</span>
<span class="abs" style="left:955.0px;top:354.2px;font-size:10.4px;line-height:14px;color:#333;letter-spacing:0.03px;">Always</span>
<span class="abs" style="left:1092.9px;top:354.2px;font-size:10.4px;line-height:14px;color:#333;letter-spacing:-0.20px;">50.00MB</span>
<span class="abs" style="left:1235.6px;top:357.1px;font-size:7.7px;line-height:10px;color:#222;letter-spacing:-0.26px;-webkit-text-stroke:0.12px #222;">41.41MB/5.38MB</span>
<span class="abs" style="left:224.9px;top:384.1px;font-size:10.4px;line-height:14px;color:#2e67a8;letter-spacing:0.11px;">alex</span>
<span class="abs" style="left:325.8px;top:384.1px;font-size:10.4px;line-height:14px;color:#333;">Alex Smith</span>
<span class="abs" style="left:423.7px;top:384.1px;font-size:10.4px;line-height:14px;color:#333;letter-spacing:-0.36px;">2026-01-16 21:34:12</span>
<span class="abs" style="left:558.9px;top:384.1px;font-size:10.4px;line-height:14px;color:#333;letter-spacing:-0.36px;">2026-01-21 21:34:12</span>
<span class="abs" style="left:694.5px;top:384.1px;font-size:10.4px;line-height:14px;color:#444;letter-spacing:-0.59px;">9E:D9:74:AA:C0:DE</span>
<span class="abs" style="left:819.7px;top:384.1px;font-size:10.4px;line-height:14px;color:#333;letter-spacing:-0.26px;">2026-01-21 20:55:19</span>
<span class="abs" style="left:955.0px;top:384.1px;font-size:10.4px;line-height:14px;color:#333;letter-spacing:0.03px;">Always</span>
<span class="abs" style="left:1092.9px;top:384.1px;font-size:10.4px;line-height:14px;color:#333;letter-spacing:-0.56px;">100.00MB</span>
<span class="abs" style="left:1234.7px;top:387.0px;font-size:7.7px;line-height:10px;color:#222;letter-spacing:-0.15px;-webkit-text-stroke:0.12px #222;">39.21MB/4.33MB</span>
<span class="abs" style="left:224.9px;top:414.1px;font-size:10.4px;line-height:14px;color:#2e67a8;letter-spacing:0.21px;">chris</span>
<span class="abs" style="left:325.8px;top:414.1px;font-size:10.4px;line-height:14px;color:#333;letter-spacing:0.01px;">Chris Miller</span>
<span class="abs" style="left:423.7px;top:414.1px;font-size:10.4px;line-height:14px;color:#333;letter-spacing:-0.36px;">2026-01-17 21:35:17</span>
<span class="abs" style="left:558.9px;top:414.1px;font-size:10.4px;line-height:14px;color:#333;letter-spacing:-0.26px;">2026-01-21 22:35:17</span>
<span class="abs" style="left:694.5px;top:414.1px;font-size:10.4px;line-height:14px;color:#444;letter-spacing:-0.59px;">9E:D9:74:AA:C0:DE</span>
<span class="abs" style="left:819.7px;top:414.1px;font-size:10.4px;line-height:14px;color:#333;letter-spacing:-0.26px;">2026-01-21 20:55:19</span>
<span class="abs" style="left:955.0px;top:414.1px;font-size:10.4px;line-height:14px;color:#333;letter-spacing:0.03px;">Always</span>
<span class="abs" style="left:1092.9px;top:414.1px;font-size:10.4px;line-height:14px;color:#333;">500.00MB</span>
<span class="abs" style="left:1231.5px;top:417.0px;font-size:7.7px;line-height:10px;color:#222;-webkit-text-stroke:0.12px #222;">43.52MB/13.06MB</span>
<span class="abs" style="left:224.9px;top:444.0px;font-size:10.4px;line-height:14px;color:#2e67a8;letter-spacing:0.55px;">sam</span>
<span class="abs" style="left:325.8px;top:444.0px;font-size:10.4px;line-height:14px;color:#333;letter-spacing:0.23px;">Sam Taylor</span>
<span class="abs" style="left:423.7px;top:444.0px;font-size:10.4px;line-height:14px;color:#333;letter-spacing:-0.16px;">2026-01-18 23:00:04</span>
<span class="abs" style="left:558.9px;top:444.0px;font-size:10.4px;line-height:14px;color:#333;letter-spacing:-0.16px;">2026-01-21 23:00:04</span>
<span class="abs" style="left:694.5px;top:444.0px;font-size:10.4px;line-height:14px;color:#444;letter-spacing:-0.59px;">9E:D9:74:AA:C0:DE</span>
<span class="abs" style="left:819.7px;top:444.0px;font-size:10.4px;line-height:14px;color:#333;letter-spacing:-0.26px;">2026-01-21 20:55:19</span>
<span class="abs" style="left:955.0px;top:444.0px;font-size:10.4px;line-height:14px;color:#333;letter-spacing:0.03px;">Always</span>
<span class="abs" style="left:1092.9px;top:444.0px;font-size:10.4px;line-height:14px;color:#333;letter-spacing:0.20px;">Unlimited</span>
<span class="abs" style="left:1232.1px;top:447.2px;font-size:7.7px;line-height:10px;color:#222;-webkit-text-stroke:0.12px #222;">0.99MB/247.38KB</span>
<span class="abs" style="left:224.9px;top:472.2px;font-size:10.4px;line-height:14px;color:#2e67a8;letter-spacing:0.43px;">jamie</span>
<span class="abs" style="left:325.8px;top:472.2px;font-size:10.4px;line-height:14px;color:#333;letter-spacing:0.20px;">Jamie Brown</span>
<span class="abs" style="left:423.7px;top:470.1px;font-size:10.4px;line-height:14px;color:#333;letter-spacing:-0.26px;">2026-01-05 21:31:50</span>
<span class="abs" style="left:558.9px;top:470.1px;font-size:10.4px;line-height:14px;color:#333;letter-spacing:-0.26px;">2026-01-05 21:31:50</span>
<span class="abs" style="left:694.5px;top:470.1px;font-size:10.4px;line-height:14px;color:#444;letter-spacing:-0.59px;">9E:D9:74:AA:C0:DE</span>
<span class="abs" style="left:819.7px;top:472.2px;font-size:10.4px;line-height:14px;color:#333;letter-spacing:-0.26px;">2026-01-21 20:55:19</span>
<span class="abs" style="left:955.0px;top:472.2px;font-size:10.4px;line-height:14px;color:#333;letter-spacing:-0.16px;">2026-01-23 00:53:12</span>
<span class="abs" style="left:1092.9px;top:472.2px;font-size:10.4px;line-height:14px;color:#333;letter-spacing:0.20px;">Unlimited</span>
<span class="abs" style="left:1242.1px;top:475.2px;font-size:7.7px;line-height:10px;color:#222;-webkit-text-stroke:0.12px #222;">0.00B/0.00B</span>
<span class="abs" style="left:224.9px;top:500.3px;font-size:10.4px;line-height:14px;color:#2e67a8;letter-spacing:-0.01px;">o8zn</span>
<span class="abs" style="left:325.8px;top:500.3px;font-size:10.4px;line-height:14px;color:#333;letter-spacing:0.03px;">ucks</span>
<span class="abs" style="left:423.7px;top:500.3px;font-size:10.4px;line-height:14px;color:#333;letter-spacing:-0.36px;">2026-01-16 21:34:12</span>
<span class="abs" style="left:558.9px;top:500.3px;font-size:10.4px;line-height:14px;color:#333;letter-spacing:-0.36px;">2026-01-21 21:34:12</span>
<span class="abs" style="left:694.5px;top:500.3px;font-size:10.4px;line-height:14px;color:#444;letter-spacing:-0.59px;">9E:D9:74:AA:C0:DE</span>
<span class="abs" style="left:819.7px;top:500.3px;font-size:10.4px;line-height:14px;color:#333;letter-spacing:-0.16px;">2026-01-21 23:02:39</span>
<span class="abs" style="left:955.0px;top:500.3px;font-size:10.4px;line-height:14px;color:#333;letter-spacing:-0.26px;">2026-01-22 21:53:12</span>
<span class="abs" style="left:1092.9px;top:500.3px;font-size:10.4px;line-height:14px;color:#333;letter-spacing:0.20px;">Unlimited</span>
<span class="abs" style="left:1242.1px;top:503.2px;font-size:7.7px;line-height:10px;color:#222;-webkit-text-stroke:0.12px #222;">0.00B/0.00B</span>
<span class="abs" style="left:224.9px;top:527.8px;font-size:10.4px;line-height:14px;color:#2e67a8;letter-spacing:-0.31px;">3x23</span>
<span class="abs" style="left:325.8px;top:527.8px;font-size:10.4px;line-height:14px;color:#333;letter-spacing:0.29px;">a9yf</span>
<span class="abs" style="left:423.7px;top:529.2px;font-size:10.4px;line-height:14px;color:#333;letter-spacing:-0.26px;">2026-01-05 21:31:50</span>
<span class="abs" style="left:558.9px;top:529.2px;font-size:10.4px;line-height:14px;color:#333;letter-spacing:-0.26px;">2026-01-05 21:31:50</span>
<span class="abs" style="left:694.5px;top:529.2px;font-size:10.4px;line-height:14px;color:#444;letter-spacing:-0.59px;">9E:D9:74:AA:C0:DE</span>
<span class="abs" style="left:819.7px;top:529.2px;font-size:10.4px;line-height:14px;color:#333;letter-spacing:-0.16px;">2026-01-21 23:34:49</span>
<span class="abs" style="left:955.0px;top:529.2px;font-size:10.4px;line-height:14px;color:#333;letter-spacing:-0.26px;">2026-01-23 01:53:12</span>
<span class="abs" style="left:1092.9px;top:527.6px;font-size:10.4px;line-height:14px;color:#333;letter-spacing:0.20px;">Unlimited</span>
<span class="abs" style="left:1242.1px;top:530.9px;font-size:7.7px;line-height:10px;color:#222;-webkit-text-stroke:0.12px #222;">0.00B/0.00B</span>
<span class="abs" style="left:224.9px;top:556.1px;font-size:10.4px;line-height:14px;color:#2e67a8;letter-spacing:0.11px;">alex</span>
<span class="abs" style="left:325.8px;top:556.1px;font-size:10.4px;line-height:14px;color:#333;">Alex Smith</span>
<span class="abs" style="left:423.7px;top:556.1px;font-size:10.4px;line-height:14px;color:#333;letter-spacing:-0.36px;">2026-01-16 21:34:12</span>
<span class="abs" style="left:558.9px;top:556.1px;font-size:10.4px;line-height:14px;color:#333;letter-spacing:-0.36px;">2026-01-21 21:34:12</span>
<span class="abs" style="left:694.5px;top:556.1px;font-size:10.4px;line-height:14px;color:#444;letter-spacing:-0.59px;">9E:D9:74:AA:C0:DE</span>
<span class="abs" style="left:819.7px;top:556.1px;font-size:10.4px;line-height:14px;color:#333;letter-spacing:-0.26px;">2026-01-21 20:55:19</span>
<span class="abs" style="left:955.0px;top:556.1px;font-size:10.4px;line-height:14px;color:#333;letter-spacing:0.03px;">Always</span>
<span class="abs" style="left:1092.9px;top:556.1px;font-size:10.4px;line-height:14px;color:#333;letter-spacing:-0.56px;">100.00MB</span>
<span class="abs" style="left:1234.7px;top:559.0px;font-size:7.7px;line-height:10px;color:#222;letter-spacing:-0.15px;-webkit-text-stroke:0.12px #222;">39.21MB/4.33MB</span>
<span class="abs" style="left:224.9px;top:586.1px;font-size:10.4px;line-height:14px;color:#2e67a8;letter-spacing:0.21px;">chris</span>
<span class="abs" style="left:325.8px;top:586.1px;font-size:10.4px;line-height:14px;color:#333;letter-spacing:0.01px;">Chris Miller</span>
<span class="abs" style="left:423.7px;top:586.1px;font-size:10.4px;line-height:14px;color:#333;letter-spacing:-0.36px;">2026-01-17 21:35:17</span>
<span class="abs" style="left:558.9px;top:586.1px;font-size:10.4px;line-height:14px;color:#333;letter-spacing:-0.26px;">2026-01-21 22:35:17</span>
<span class="abs" style="left:694.5px;top:586.1px;font-size:10.4px;line-height:14px;color:#444;letter-spacing:-0.59px;">9E:D9:74:AA:C0:DE</span>
<span class="abs" style="left:819.7px;top:586.1px;font-size:10.4px;line-height:14px;color:#333;letter-spacing:-0.26px;">2026-01-21 20:55:19</span>
<span class="abs" style="left:955.0px;top:586.1px;font-size:10.4px;line-height:14px;color:#333;letter-spacing:0.03px;">Always</span>
<span class="abs" style="left:1092.9px;top:586.1px;font-size:10.4px;line-height:14px;color:#333;">500.00MB</span>
<span class="abs" style="left:1231.5px;top:589.0px;font-size:7.7px;line-height:10px;color:#222;-webkit-text-stroke:0.12px #222;">43.52MB/13.06MB</span>
<span class="abs" style="left:224.9px;top:616.0px;font-size:10.4px;line-height:14px;color:#2e67a8;letter-spacing:0.55px;">sam</span>
<span class="abs" style="left:325.8px;top:616.0px;font-size:10.4px;line-height:14px;color:#333;letter-spacing:0.23px;">Sam Taylor</span>
<span class="abs" style="left:423.7px;top:616.0px;font-size:10.4px;line-height:14px;color:#333;letter-spacing:-0.16px;">2026-01-18 23:00:04</span>
<span class="abs" style="left:558.9px;top:616.0px;font-size:10.4px;line-height:14px;color:#333;letter-spacing:-0.16px;">2026-01-21 23:00:04</span>
<span class="abs" style="left:694.5px;top:616.0px;font-size:10.4px;line-height:14px;color:#444;letter-spacing:-0.59px;">9E:D9:74:AA:C0:DE</span>
<span class="abs" style="left:819.7px;top:616.0px;font-size:10.4px;line-height:14px;color:#333;letter-spacing:-0.26px;">2026-01-21 20:55:19</span>
<span class="abs" style="left:955.0px;top:616.0px;font-size:10.4px;line-height:14px;color:#333;letter-spacing:0.03px;">Always</span>
<span class="abs" style="left:1092.9px;top:616.0px;font-size:10.4px;line-height:14px;color:#333;letter-spacing:0.20px;">Unlimited</span>
<span class="abs" style="left:1232.1px;top:619.2px;font-size:7.7px;line-height:10px;color:#222;-webkit-text-stroke:0.12px #222;">0.99MB/247.38KB</span>
<span class="abs" style="left:224.9px;top:644.2px;font-size:10.4px;line-height:14px;color:#2e67a8;letter-spacing:0.43px;">jamie</span>
<span class="abs" style="left:325.8px;top:644.2px;font-size:10.4px;line-height:14px;color:#333;letter-spacing:0.20px;">Jamie Brown</span>
<span class="abs" style="left:423.7px;top:642.1px;font-size:10.4px;line-height:14px;color:#333;letter-spacing:-0.26px;">2026-01-05 21:31:50</span>
<span class="abs" style="left:558.9px;top:642.1px;font-size:10.4px;line-height:14px;color:#333;letter-spacing:-0.26px;">2026-01-05 21:31:50</span>
<span class="abs" style="left:694.5px;top:642.1px;font-size:10.4px;line-height:14px;color:#444;letter-spacing:-0.59px;">9E:D9:74:AA:C0:DE</span>
<span class="abs" style="left:819.7px;top:644.2px;font-size:10.4px;line-height:14px;color:#333;letter-spacing:-0.26px;">2026-01-21 20:55:19</span>
<span class="abs" style="left:955.0px;top:644.2px;font-size:10.4px;line-height:14px;color:#333;letter-spacing:-0.16px;">2026-01-23 00:53:12</span>
<span class="abs" style="left:1092.9px;top:644.2px;font-size:10.4px;line-height:14px;color:#333;letter-spacing:0.20px;">Unlimited</span>
<span class="abs" style="left:1242.1px;top:647.2px;font-size:7.7px;line-height:10px;color:#222;-webkit-text-stroke:0.12px #222;">0.00B/0.00B</span>
<span class="abs" style="left:224.9px;top:672.3px;font-size:10.4px;line-height:14px;color:#2e67a8;letter-spacing:-0.01px;">o8zn</span>
<span class="abs" style="left:325.8px;top:672.3px;font-size:10.4px;line-height:14px;color:#333;letter-spacing:0.03px;">ucks</span>
<span class="abs" style="left:423.7px;top:672.3px;font-size:10.4px;line-height:14px;color:#333;letter-spacing:-0.36px;">2026-01-16 21:34:12</span>
<span class="abs" style="left:558.9px;top:672.3px;font-size:10.4px;line-height:14px;color:#333;letter-spacing:-0.36px;">2026-01-21 21:34:12</span>
<span class="abs" style="left:694.5px;top:672.3px;font-size:10.4px;line-height:14px;color:#444;letter-spacing:-0.59px;">9E:D9:74:AA:C0:DE</span>
<span class="abs" style="left:819.7px;top:672.3px;font-size:10.4px;line-height:14px;color:#333;letter-spacing:-0.16px;">2026-01-21 23:02:39</span>
<span class="abs" style="left:955.0px;top:672.3px;font-size:10.4px;line-height:14px;color:#333;letter-spacing:-0.26px;">2026-01-22 21:53:12</span>
<span class="abs" style="left:1092.9px;top:672.3px;font-size:10.4px;line-height:14px;color:#333;letter-spacing:0.20px;">Unlimited</span>
<span class="abs" style="left:1242.1px;top:675.2px;font-size:7.7px;line-height:10px;color:#222;-webkit-text-stroke:0.12px #222;">0.00B/0.00B</span>
<span class="abs" style="left:224.9px;top:699.8px;font-size:10.4px;line-height:14px;color:#2e67a8;letter-spacing:-0.31px;">3x23</span>
<span class="abs" style="left:325.8px;top:699.8px;font-size:10.4px;line-height:14px;color:#333;letter-spacing:0.29px;">a9yf</span>
<span class="abs" style="left:423.7px;top:701.2px;font-size:10.4px;line-height:14px;color:#333;letter-spacing:-0.26px;">2026-01-05 21:31:50</span>
<span class="abs" style="left:558.9px;top:701.2px;font-size:10.4px;line-height:14px;color:#333;letter-spacing:-0.26px;">2026-01-05 21:31:50</span>
<span class="abs" style="left:694.5px;top:701.2px;font-size:10.4px;line-height:14px;color:#444;letter-spacing:-0.59px;">9E:D9:74:AA:C0:DE</span>
<span class="abs" style="left:819.7px;top:701.2px;font-size:10.4px;line-height:14px;color:#333;letter-spacing:-0.16px;">2026-01-21 23:34:49</span>
<span class="abs" style="left:955.0px;top:701.2px;font-size:10.4px;line-height:14px;color:#333;letter-spacing:-0.26px;">2026-01-23 01:53:12</span>
<span class="abs" style="left:1092.9px;top:699.6px;font-size:10.4px;line-height:14px;color:#333;letter-spacing:0.20px;">Unlimited</span>
<span class="abs" style="left:1242.1px;top:702.9px;font-size:7.7px;line-height:10px;color:#222;-webkit-text-stroke:0.12px #222;">0.00B/0.00B</span>
<span class="abs" style="left:173.5px;top:734.6px;font-size:10.4px;line-height:14px;color:#333;letter-spacing:-0.19px;">Showing 1 to 7 of 7 entries</span>
<!--/TABLE-->
<div id="pg"></div><div id="pg1"></div>
<svg style="position:absolute;left:1293.800px;top:738.600px" width="2.800" height="4.400" viewBox="0 0 5 8"><path fill="none" stroke="#888" stroke-width="1.200" d="M4.300 .6L1 4l3.300 3.400"/></svg>
<span class="abs pgt" style="left:1303.500px;top:735.700px;letter-spacing:-0.09px">Previous</span>
<span class="abs pgt" style="left:1350.900px;top:735.700px;color:#fff">1</span>
<span class="abs pgt" style="left:1370.300px;top:735.700px;letter-spacing:-0.14px">Next</span>
<svg style="position:absolute;left:1393.800px;top:738.600px" width="2.800" height="4.400" viewBox="0 0 5 8"><path fill="none" stroke="#888" stroke-width="1.200" d="M.7 .6L4 4 .7 7.400"/></svg>

</div>
</body>
</html>
